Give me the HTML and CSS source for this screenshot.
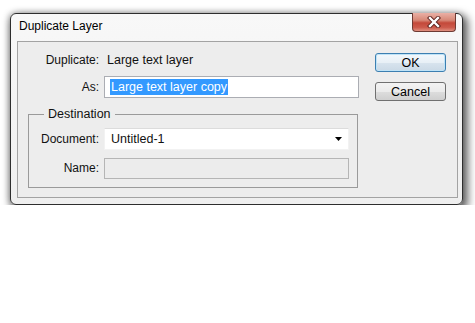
FILE: index.html
```html
<!DOCTYPE html>
<html>
<head>
<meta charset="utf-8">
<link rel="stylesheet" href="styles.css">
</head>
<body>
<div class="window">
  <div class="titlebar">
    <span class="title">Duplicate Layer</span>
    <div class="close">
      <svg width="14" height="12" viewBox="0 0 14 12">
        <path d="M3 2 L11 10 M11 2 L3 10" stroke="#5a1f1a" stroke-width="4.2" stroke-linecap="square" fill="none"/>
        <path d="M3 2 L11 10 M11 2 L3 10" stroke="#ffffff" stroke-width="2.4" stroke-linecap="square" fill="none"/>
      </svg>
    </div>
  </div>
  <div class="client">
    <div class="main">
      <div class="row r1"><span class="label">Duplicate:</span><span class="value">Large text layer</span></div>
      <div class="row r2"><span class="label">As:</span><div class="input as"><span class="sel">Large text layer copy</span></div></div>
      <fieldset class="group">
        <legend>Destination</legend>
        <div class="row grow"><span class="label">Document:</span>
          <div class="select"><span>Untitled-1</span>
            <svg width="7" height="4" viewBox="0 0 7 4"><path d="M0 0 H7 L3.5 4 Z" fill="#000"/></svg>
          </div>
        </div>
        <div class="row grow"><span class="label">Name:</span><div class="input disabled"></div></div>
      </fieldset>
    </div>
    <div class="buttons">
      <div class="btn default">OK</div>
      <div class="btn">Cancel</div>
    </div>
  </div>
</div>
</body>
</html>
```

FILE: styles.css
```css
* { box-sizing: border-box; }
html, body { margin: 0; padding: 0; background: #ffffff; }
body {
  padding: 13px 0 0 10px;
  font-family: "Liberation Sans", Arial, sans-serif;
  font-size: 12px;
  color: #111;
}
.window {
  width: 453px;
  height: 192px;
  border: 1px solid #2e2e2e;
  border-radius: 6px;
  background: linear-gradient(#f8f8f8, #efefef);
  box-shadow: 3px 4px 8px 2px rgba(0,0,0,0.6), -1px 0 6px rgba(0,0,0,0.25);
  padding: 0 4px 6px 6px;
  display: flex;
  flex-direction: column;
}
.titlebar {
  height: 27px;
  display: flex;
  align-items: flex-start;
  justify-content: space-between;
}
.title {
  padding: 5px 0 0 2px;
  font-size: 12px;
  color: #000;
}
.close {
  margin-top: -1px;
  margin-right: 2px;
  width: 44px;
  height: 19px;
  border: 1px solid #6e3a33;
  border-top: none;
  border-radius: 0 0 4px 4px;
  background: linear-gradient(#eab0a5 0%, #d78877 40%, #c4493a 55%, #cc5a4b 80%, #e09080 100%);
  display: flex;
  align-items: center;
  justify-content: center;
}
.client {
  flex: 1;
  border: 1px solid #a3a3a3;
  background: #ededed;
  display: flex;
}
.main {
  width: 341px;
  padding-top: 7px;
}
.row {
  display: grid;
  grid-template-columns: 81px 1fr;
  column-gap: 5px;
  align-items: center;
  height: 22px;
}
.r2 { margin-top: 5px; }
.label { text-align: right; font-size: 12px; }
.value { padding-left: 3px; font-size: 12.5px; }
.input {
  height: 22px;
  border: 1px solid #abadb3;
  background: #fff;
  display: flex;
  align-items: center;
  padding-left: 5px;
}
.sel {
  background: #3399ff;
  color: #fff;
  font-size: 12.5px;
  line-height: 16px;
  padding: 0 1px;
}
.group {
  margin: 9px 1px 0 10px;
  padding: 7px 8px 8px 0;
  border: 1px solid #9a9a9a;
  min-width: 0;
}
.group legend {
  margin-left: 15px;
  padding: 0 4px;
  line-height: 14px;
  font-size: 12.5px;
}
.grow { grid-template-columns: 70px 1fr; }
.grow + .grow { margin-top: 7px; }
.grow + .grow .input { height: 21px; }
.select {
  height: 22px;
  background: #fff;
  border: 1px solid #f2f2f2;
  border-top-color: #dcdcdc;
  display: flex;
  align-items: center;
  justify-content: space-between;
  padding: 0 6px 0 6px;
  font-size: 12.5px;
}
.input.disabled {
  background: #ececec;
  border-color: #b5b5b5;
}
.buttons {
  margin-left: 16px;
  padding-top: 11px;
  display: flex;
  flex-direction: column;
  gap: 10px;
}
.btn {
  width: 71px;
  height: 19px;
  border: 1px solid #707070;
  border-radius: 3px;
  background: linear-gradient(#f3f3f3 0%, #ebebeb 50%, #dddddd 51%, #cfcfcf 100%);
  display: flex;
  align-items: center;
  justify-content: center;
  font-size: 12.5px;
  color: #000;
}
.btn.default {
  border-color: #3c7fb1;
  background: linear-gradient(#f2f8fc 0%, #e8f0f6 50%, #d8e4ee 51%, #cad9e6 100%);
  box-shadow: inset 0 0 0 1px #bfe3f7;
}
```
